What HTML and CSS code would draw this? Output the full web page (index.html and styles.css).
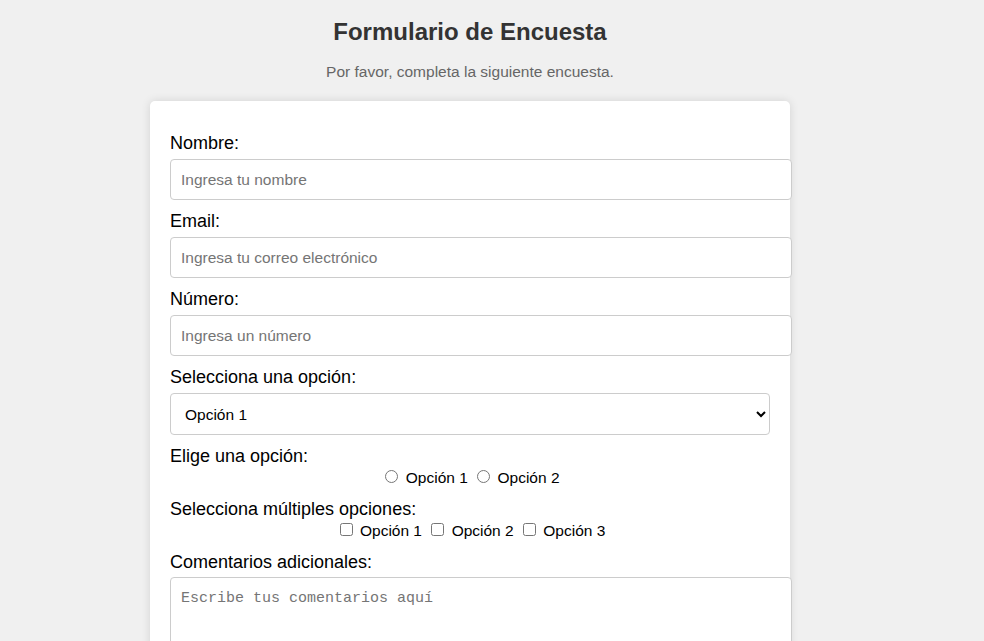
FILE: index.html
```html
<!DOCTYPE html>
<html lang="es">
<head>
<meta charset="utf-8">
<title>Formulario de Encuesta</title>
<link rel="stylesheet" href="styles.css">
</head>
<body>
<div class="page">
  <h1 class="title">Formulario de Encuesta</h1>
  <p class="subtitle">Por favor, completa la siguiente encuesta.</p>
  <form class="card">
    <label class="field-label" for="nombre">Nombre:</label>
    <input class="text-input" id="nombre" type="text" placeholder="Ingresa tu nombre">

    <label class="field-label" for="email">Email:</label>
    <input class="text-input" id="email" type="email" placeholder="Ingresa tu correo electrónico">

    <label class="field-label" for="numero">Número:</label>
    <input class="text-input" id="numero" type="number" placeholder="Ingresa un número">

    <label class="field-label" for="opcion">Selecciona una opción:</label>
    <select class="select-input" id="opcion">
      <option>Opción 1</option>
      <option>Opción 2</option>
      <option>Opción 3</option>
    </select>

    <label class="field-label">Elige una opción:</label>
    <div class="choice-row">
      <input class="choice" type="radio" name="eleccion" id="radio1"> <label class="choice-label" for="radio1">Opción 1</label>
      <input class="choice" type="radio" name="eleccion" id="radio2"> <label class="choice-label" for="radio2">Opción 2</label>
    </div>

    <label class="field-label">Selecciona múltiples opciones:</label>
    <div class="choice-row">
      <input class="choice" type="checkbox" id="check1"> <label class="choice-label" for="check1">Opción 1</label>
      <input class="choice" type="checkbox" id="check2"> <label class="choice-label" for="check2">Opción 2</label>
      <input class="choice" type="checkbox" id="check3"> <label class="choice-label" for="check3">Opción 3</label>
    </div>

    <label class="field-label" for="comentarios">Comentarios adicionales:</label>
    <textarea class="text-area" id="comentarios" placeholder="Escribe tus comentarios aquí"></textarea>
  </form>
</div>
</body>
</html>
```

FILE: styles.css
```css
html, body {
  margin: 0;
  background: #f0f0f0;
  font-family: Arial, "Liberation Sans", sans-serif;
}

.page {
  width: 940px;
}

.title {
  margin: 18px 0 17px;
  text-align: center;
  font-size: 24px;
  font-weight: bold;
  color: #333;
}

.subtitle {
  margin: 0 0 20px;
  text-align: center;
  font-size: 15.5px;
  color: #666;
}

.card {
  width: 600px;
  margin: 0 auto;
  padding: 21px 20px 20px;
  background: #fff;
  border-radius: 5px;
  box-shadow: 0 0 10px rgba(0, 0, 0, 0.12);
}

.field-label {
  display: block;
  margin: 11px 0 0;
  font-size: 18px;
  line-height: 20px;
  color: #000;
}

.text-input {
  display: block;
  box-sizing: content-box;
  width: 100%;
  height: 19px;
  margin: 6px 0 0;
  padding: 10px;
  border: 1px solid #ccc;
  border-radius: 4px;
  font-family: inherit;
  font-size: 15.5px;
  color: #000;
  background: #fff;
}

.text-input::placeholder {
  color: #757575;
}

.select-input {
  display: block;
  width: 100%;
  height: 42px;
  margin: 6px 0 0;
  padding: 0 10px;
  border: 1px solid #ccc;
  border-radius: 4px;
  font-family: inherit;
  font-size: 15.5px;
  color: #000;
  background: #fff;
}

.choice-row {
  padding: 1px 0 1px;
  text-align: center;
  font-size: 15.5px;
  color: #000;
}

.choice {
  margin: 3px 3px 0 5px;
}

.text-area {
  display: block;
  width: 100%;
  height: 100px;
  margin: 5px 0 0;
  padding: 10px;
  border: 1px solid #ccc;
  border-radius: 4px;
  font-family: "Liberation Mono", "Courier New", monospace;
  font-size: 15px;
  line-height: 21px;
  background: #fff;
  resize: vertical;
}

.text-area::placeholder {
  color: #757575;
}
```
